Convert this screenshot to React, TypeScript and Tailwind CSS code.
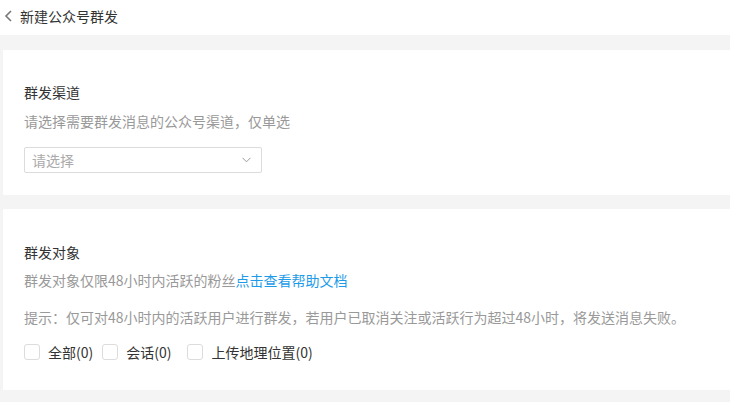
import { useState } from 'react'

const font = { fontFamily: '"Noto Sans CJK SC", "Noto Sans", sans-serif' }

function Checkbox({ label }: { label: string }) {
  const [checked, setChecked] = useState(false)
  return (
    <label className="flex items-center cursor-pointer" onClick={() => setChecked(!checked)}>
      <span
        className={`w-[16px] h-[16px] rounded-[3px] border ${
          checked ? 'border-[#1e9be8] bg-[#1e9be8]' : 'border-[#dcdcdc] bg-white'
        }`}
      />
      <span className="ml-[8px] text-[14px] leading-[20px] text-[#333]">{label}</span>
    </label>
  )
}

export default function App() {
  return (
    <div className="w-[730px] h-[402px] overflow-hidden bg-[#f4f4f4]" style={font}>
      <header className="h-[35px] bg-white flex items-center pl-[4px]">
        <svg width="9" height="14" viewBox="0 0 9 14" fill="none" className="mb-[4px]">
          <path d="M7 2L2 7l5 5" stroke="#777" strokeWidth="1.6" />
        </svg>
        <span className="ml-[7px] mb-[4px] text-[14px] leading-[20px] text-[#333]">新建公众号群发</span>
      </header>

      <main className="pt-[15px] pl-[3px] flex flex-col gap-[14px]">
        <section className="bg-white pl-[21px] pt-[32px] pb-[22px]">
          <h2 className="text-[14px] leading-[20px] text-[#333]">群发渠道</h2>
          <p className="mt-[9px] text-[14px] leading-[20px] text-[#999]">请选择需要群发消息的公众号渠道，仅单选</p>
          <div className="mt-[16px] w-[238px] h-[26px] border border-[#dcdcdc] rounded-[2px] flex items-center justify-between pl-[7px] pr-[10px]">
            <span className="text-[14px] text-[#aaa]">请选择</span>
            <svg width="9" height="6" viewBox="0 0 9 6" fill="none">
              <path d="M0.5 0.8l4 4 4-4" stroke="#999" strokeWidth="1" />
            </svg>
          </div>
        </section>

        <section className="bg-white pl-[21px] pt-[33px] pb-[28px]">
          <h2 className="text-[14px] leading-[20px] text-[#333]">群发对象</h2>
          <p className="mt-[8px] text-[14px] leading-[20px] text-[#999]">
            群发对象仅限48小时内活跃的粉丝
            <a href="#" className="text-[#1e9be8]">点击查看帮助文档</a>
          </p>
          <p className="mt-[17px] text-[14px] leading-[20px] text-[#999]">
            提示：仅可对48小时内的活跃用户进行群发，若用户已取消关注或活跃行为超过48小时，将发送消息失败。
          </p>
          <div className="mt-[15px] flex items-center gap-[9px]">
            <Checkbox label="全部(0)" />
            <Checkbox label="会话(0)" />
            <div className="ml-[7px]">
              <Checkbox label="上传地理位置(0)" />
            </div>
          </div>
        </section>
      </main>
    </div>
  )
}
